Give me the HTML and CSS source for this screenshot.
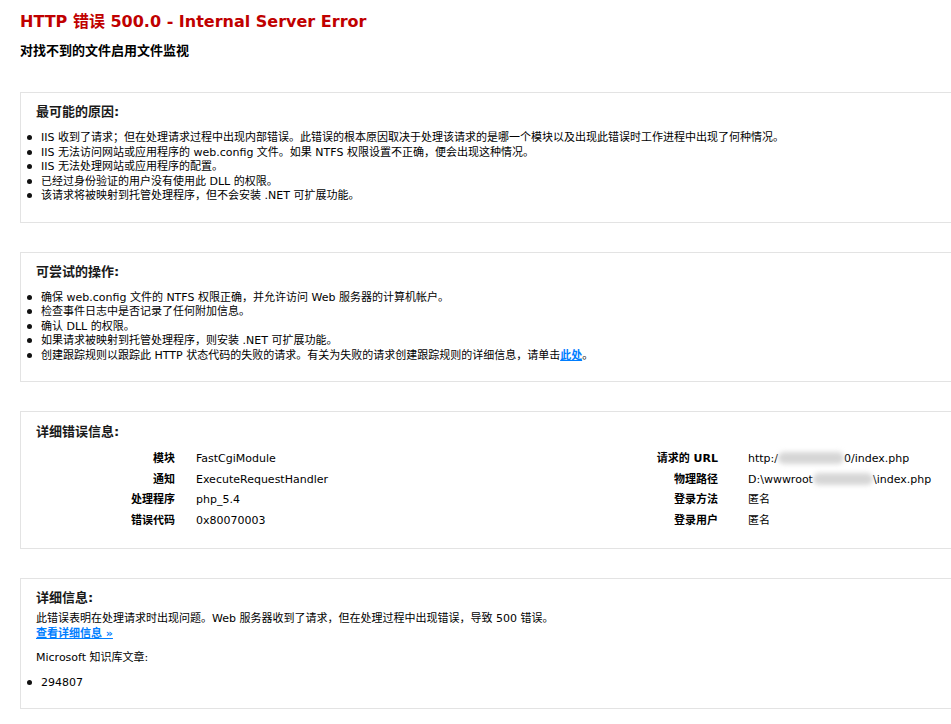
FILE: index.html
```html
<!DOCTYPE html>
<html lang="zh-CN">
<head>
<meta charset="utf-8">
<title>IIS 详细错误 - 500.0 - Internal Server Error</title>
<link rel="stylesheet" href="styles.css">
</head>
<body>
<div class="content">
  <header class="page-head">
    <h3 class="title">HTTP 错误 500.0 - Internal Server Error</h3>
    <h4 class="subtitle">对找不到的文件启用文件监视</h4>
  </header>

  <section class="box">
    <h5 class="legend">最可能的原因:</h5>
    <ul class="list">
      <li>IIS 收到了请求；但在处理请求过程中出现内部错误。此错误的根本原因取决于处理该请求的是哪一个模块以及出现此错误时工作进程中出现了何种情况。</li>
      <li>IIS 无法访问网站或应用程序的 web.config 文件。如果 NTFS 权限设置不正确，便会出现这种情况。</li>
      <li>IIS 无法处理网站或应用程序的配置。</li>
      <li>已经过身份验证的用户没有使用此 DLL 的权限。</li>
      <li>该请求将被映射到托管处理程序，但不会安装 .NET 可扩展功能。</li>
    </ul>
  </section>

  <section class="box">
    <h5 class="legend">可尝试的操作:</h5>
    <ul class="list">
      <li>确保 web.config 文件的 NTFS 权限正确，并允许访问 Web 服务器的计算机帐户。</li>
      <li>检查事件日志中是否记录了任何附加信息。</li>
      <li>确认 DLL 的权限。</li>
      <li>如果请求被映射到托管处理程序，则安装 .NET 可扩展功能。</li>
      <li>创建跟踪规则以跟踪此 HTTP 状态代码的失败的请求。有关为失败的请求创建跟踪规则的详细信息，请单击<a class="link" href="#">此处</a>。</li>
    </ul>
  </section>

  <section class="box box-details">
    <h5 class="legend">详细错误信息:</h5>
    <div class="details">
      <table class="dtable dtable-left">
        <tr><th>模块</th><td>FastCgiModule</td></tr>
        <tr><th>通知</th><td>ExecuteRequestHandler</td></tr>
        <tr><th>处理程序</th><td>php_5.4</td></tr>
        <tr><th>错误代码</th><td>0x80070003</td></tr>
      </table>
      <table class="dtable dtable-right">
        <tr><th>请求的 URL</th><td>http:/<span class="redact redact-url" aria-hidden="true"></span>0/index.php</td></tr>
        <tr><th>物理路径</th><td>D:\wwwroot<span class="redact redact-path" aria-hidden="true"></span>\index.php</td></tr>
        <tr><th>登录方法</th><td>匿名</td></tr>
        <tr><th>登录用户</th><td>匿名</td></tr>
      </table>
    </div>
  </section>

  <section class="box box-last">
    <h5 class="legend">详细信息:</h5>
    <p class="para">此错误表明在处理请求时出现问题。Web 服务器收到了请求，但在处理过程中出现错误，导致 500 错误。<br><a class="link" href="#">查看详细信息 »</a></p>
    <p class="para">Microsoft 知识库文章:</p>
    <ul class="list list-kb">
      <li>294807</li>
    </ul>
  </section>
</div>
</body>
</html>
```
FILE: styles.css
```css
html, body {
  margin: 0;
  padding: 0;
  background: #ffffff;
}

body {
  font-family: "DejaVu Sans", "Noto Sans CJK SC", sans-serif;
  font-size: 11px;
  line-height: 14.5px;
  color: #000000;
}

.content {
  padding-left: 20px;
  padding-bottom: 8px;
}

.page-head {
  padding-top: 12px;
  padding-bottom: 32px;
}

.title {
  margin: 0;
  font-size: 16px;
  line-height: 20px;
  font-weight: bold;
  color: #c00000;
}

.subtitle {
  margin: 10px 0 0 0;
  font-size: 13px;
  line-height: 18px;
  font-weight: bold;
  color: #000000;
}

.box {
  border: 1px solid #e3e3e3;
  border-right: none;
  padding: 11px 0 18px 15px;
  margin-bottom: 29px;
}

.box-details {
  padding-top: 12px;
  padding-bottom: 17px;
}

.box-last {
  margin-bottom: 0;
}

.legend {
  margin: 0;
  font-size: 13px;
  line-height: 16px;
  font-weight: bold;
  color: #1a1a1a;
}

.list {
  margin: 11px 0 0 5px;
  padding: 0;
  list-style: none;
}

.list li::before {
  content: "";
  display: inline-block;
  width: 5px;
  height: 5px;
  margin-left: -14.5px;
  margin-right: 9.5px;
  border-radius: 50%;
  background: #111111;
  vertical-align: 1px;
}

.list-kb {
  margin-top: 10px;
}

.para {
  margin: 6px 0 0 0;
}

.para + .para {
  margin-top: 10px;
}

.link {
  color: #007eff;
  font-weight: bold;
  text-decoration: underline;
}

.details {
  display: flex;
  margin-top: 9px;
}

.dtable {
  border-collapse: collapse;
  border-spacing: 0;
}

.dtable th,
.dtable td {
  padding: 3px 0;
  vertical-align: top;
  text-align: left;
  font-weight: normal;
}

.dtable th {
  text-align: right;
  font-weight: bold;
}

.dtable-left {
  width: 430px;
}

.dtable-left th {
  width: 139px;
  padding-right: 21px;
}

.dtable-right th {
  width: 252px;
  padding-right: 30px;
}

.dtable td {
  white-space: nowrap;
}

.redact {
  display: inline-block;
  height: 12px;
  vertical-align: -2px;
  background: #d6d6d6;
  border-radius: 6px;
  filter: blur(2.5px);
}

.redact-url {
  width: 66px;
}

.redact-path {
  width: 60px;
}
```
